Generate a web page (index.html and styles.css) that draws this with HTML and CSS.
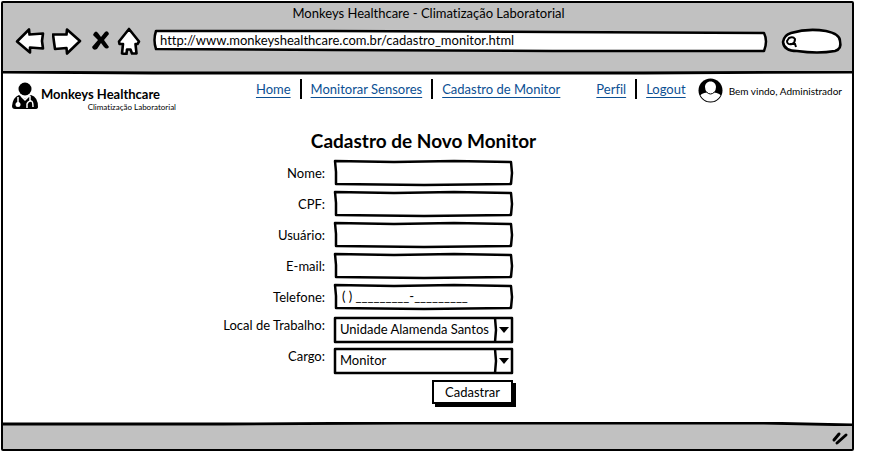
FILE: index.html
```html
<!DOCTYPE html>
<html lang="pt-BR">
<head>
<meta charset="utf-8">
<title>Monkeys Healthcare - Climatização Laboratorial</title>
<link rel="stylesheet" href="styles.css">
</head>
<body>
<div class="window">
  <header class="chrome">
    <div class="chrome-title">Monkeys Healthcare - Climatização Laboratorial</div>
    <div class="toolbar">
      <button class="tool" type="button" aria-label="Voltar">
        <svg width="30" height="28" viewBox="0 0 30 28"><path d="M2 14.500 14 2.500 14.500 7.500 28 6.500 27 14 28 21.500 15 20.500 15 25.500Z"/></svg>
      </button>
      <button class="tool" type="button" aria-label="Avançar">
        <svg width="30" height="28" viewBox="0 0 30 28"><path d="M1 7.500 14.500 7.500 15 2.500 28 14 15 26.500 14.500 21 3 22 2 15Z"/></svg>
      </button>
      <button class="tool stop" type="button" aria-label="Parar">
        <svg width="18" height="20" viewBox="0 0 18 20"><path class="solid" d="M2 2Q4 -1 6 2L9 6 13 1Q16 -1 17 3L12 9 17 16Q15 19 12 16L9 12 5 18Q1 20 0 16L6 9 1 4Z"/></svg>
      </button>
      <button class="tool" type="button" aria-label="Início">
        <svg width="24" height="28" viewBox="0 0 24 28"><path d="M12 2 22 14.500 20.500 17 18.500 17 19.500 26.500 15 26.500 13.500 22.500 10 22.500 9.500 27 5 26.500 6 17 2.500 17 2 14.500Z"/></svg>
      </button>
      <div class="address">
        <svg class="frame" viewBox="0 0 616 22" preserveAspectRatio="none" aria-hidden="true"><path d="M3 1 180 1 400 2 612 3Q616 11 612 21L400 21 180 20 3 19Q0 10 3 1Z"/></svg>
        <input type="text" aria-label="Endereço" value="http://www.monkeyshealthcare.com.br/cadastro_monitor.html">
      </div>
      <div class="search">
        <svg class="frame" viewBox="0 0 60 25" preserveAspectRatio="none" aria-hidden="true"><path d="M9 4Q26 -1 44 2Q58 5 58 12Q60 20 53 22Q36 25 15 22Q2 22 1 13Q2 6 9 4Z"/></svg>
        <svg class="lens" width="12" height="13" viewBox="0 0 12 13" aria-hidden="true"><path d="M3 2Q7 0 9 3Q9 7 6 8Q1 9 1 5ZM4 8 9 8 10 11"/></svg>
        <input type="search" aria-label="Pesquisar">
      </div>
    </div>
  </header>
  <svg class="rule" viewBox="0 0 848 4" preserveAspectRatio="none" aria-hidden="true"><path d="M0 1 150 2 640 2 848 1"/></svg>

  <div class="page">
    <div class="site-header">
      <div class="brand">
        <svg width="27" height="28" viewBox="0 0 27 28" aria-hidden="true">
          <circle cx="13" cy="7" r="6.500"/>
          <path d="M7 13 13 17 19 13Q26 15 26 25Q26 27 23 27H3Q0 27 0 24Q1 15 7 13Z"/>
          <path class="light" d="M6 15V21M15 26V22Q16 19 19 19Q21 19 21 25M18 19V14M9 14 13 18 17 14"/>
          <circle class="light" cx="6" cy="22.500" r="2.500"/>
        </svg>
        <div class="brand-text">
          <strong>Monkeys Healthcare</strong>
          <small>Climatização Laboratorial</small>
        </div>
      </div>
      <nav class="menu">
        <a href="#">Home</a>
        <a href="#">Monitorar Sensores</a>
        <a href="#">Cadastro de Monitor</a>
      </nav>
      <nav class="menu">
        <a href="#">Perfil</a>
        <a href="#">Logout</a>
      </nav>
      <div class="user">
        <svg width="25" height="25" viewBox="0 0 25 25" aria-hidden="true">
          <circle cx="12.500" cy="12.500" r="12"/>
          <path class="light" d="M12.500 3.500C9 3.500 7 6 7 9Q7 12 9 14.500Q3 15.500 2.500 17.500Q6 23.500 12.500 23.500Q19 23.500 22.500 17.500Q22 15.500 16 14.500Q18 12 18 9C18 6 16 3.500 12.500 3.500Z"/>
          <path class="chin" d="M8.500 14Q12.500 18 16.500 14"/>
        </svg>
        <span>Bem vindo, Administrador</span>
      </div>
    </div>

    <main>
      <h1>Cadastro de Novo Monitor</h1>
      <form>
        <div class="group">
          <label for="nome">Nome:</label>
          <div class="field"><svg class="frame" viewBox="0 0 179 26" preserveAspectRatio="none" aria-hidden="true"><path d="M1 1 60 2 120 1 177 2 178 13 177 24 90 25 2 24 2 12Z"/></svg><input id="nome" type="text"></div>
          <label for="cpf">CPF:</label>
          <div class="field"><svg class="frame" viewBox="0 0 179 26" preserveAspectRatio="none" aria-hidden="true"><path d="M1 1 60 2 120 1 177 2 178 13 177 24 90 25 2 24 2 12Z"/></svg><input id="cpf" type="text"></div>
          <label for="usuario">Usuário:</label>
          <div class="field"><svg class="frame" viewBox="0 0 179 26" preserveAspectRatio="none" aria-hidden="true"><path d="M1 1 60 2 120 1 177 2 178 13 177 24 90 25 2 24 2 12Z"/></svg><input id="usuario" type="text"></div>
          <label for="email">E-mail:</label>
          <div class="field"><svg class="frame" viewBox="0 0 179 26" preserveAspectRatio="none" aria-hidden="true"><path d="M1 1 60 2 120 1 177 2 178 13 177 24 90 25 2 24 2 12Z"/></svg><input id="email" type="email"></div>
          <label for="telefone">Telefone:</label>
          <div class="field"><svg class="frame" viewBox="0 0 179 26" preserveAspectRatio="none" aria-hidden="true"><path d="M1 1 60 2 120 1 177 2 178 13 177 24 90 25 2 24 2 12Z"/></svg><input id="telefone" type="tel" value="( ) _________-_________"></div>
        </div>
        <div class="group choices">
          <label for="local">Local de Trabalho:</label>
          <div class="field"><svg class="frame" viewBox="0 0 179 26" preserveAspectRatio="none" aria-hidden="true"><path d="M1 1 70 1 178 1 178 13 178 25 90 25 1 25 1 12ZM161 1 162 13 161 25"/></svg><select id="local"><option>Unidade Alamenda Santos</option></select><svg class="caret" width="10" height="6" viewBox="0 0 10 6" aria-hidden="true"><path d="M0 0H10L5 6Z"/></svg></div>
          <label for="cargo">Cargo:</label>
          <div class="field"><svg class="frame" viewBox="0 0 179 26" preserveAspectRatio="none" aria-hidden="true"><path d="M1 1 70 1 178 1 178 13 178 25 90 25 1 25 1 12ZM161 1 162 13 161 25"/></svg><select id="cargo"><option>Monitor</option></select><svg class="caret" width="10" height="6" viewBox="0 0 10 6" aria-hidden="true"><path d="M0 0H10L5 6Z"/></svg></div>
        </div>
        <div class="group actions">
          <button class="submit" type="submit">Cadastrar</button>
        </div>
      </form>
    </main>
  </div>

  <svg class="rule" viewBox="0 0 848 4" preserveAspectRatio="none" aria-hidden="true"><path d="M0 2 220 2 400 1 760 1 848 3"/></svg>
  <footer class="status">
    <svg width="18" height="16" viewBox="0 0 18 16" aria-hidden="true"><path d="M3 10 8 4M6 13 15 5"/></svg>
  </footer>
</div>
</body>
</html>
```
FILE: styles.css
```css
* {
  box-sizing: border-box;
}

body {
  margin: 0;
  display: flex;
  min-height: 100vh;
  padding: 1px 23px 1px 1px;
  background: #fff;
  color: #000;
  font: 13px/16px Lato, "Liberation Sans", sans-serif;
  font-variant-ligatures: none;
}

input,
select,
button {
  margin: 0;
  border: 0;
  background: none;
  color: inherit;
  font: inherit;
  outline: none;
}

.window {
  flex: 1;
  display: flex;
  flex-direction: column;
  min-width: 0;
  border: 2px solid #000;
  border-radius: 2px;
}

.chrome {
  padding: 2px 10px 16px 12px;
  background: #c1c1c1;
}

.chrome-title {
  text-align: center;
}

.toolbar {
  display: flex;
  align-items: center;
  gap: 6px;
  padding-top: 6px;
}

.tool {
  display: flex;
  padding: 0;
}

.tool + .tool {
  margin-left: 1px;
}

.tool path {
  fill: #fff;
  stroke: #000;
  stroke-width: 2.600;
  stroke-linejoin: round;
}

.tool .solid {
  fill: #000;
  stroke: none;
}

.tool.stop {
  margin-left: 4px;
}

.address,
.search,
.field {
  position: relative;
  display: flex;
}

.address {
  flex: 1;
  height: 22px;
  margin: 0 8px 0 6px;
}

.address input {
  position: relative;
  flex: 1;
  min-width: 0;
  padding: 0 7px 2px;
}

.search {
  width: 60px;
  height: 25px;
}

.search input {
  position: relative;
  width: 100%;
  padding: 0 6px 0 18px;
}

.frame {
  position: absolute;
  inset: 0;
  width: 100%;
  height: 100%;
  overflow: visible;
}

.frame path {
  fill: #fff;
  stroke: #000;
  stroke-width: 2.500;
  stroke-linejoin: round;
  vector-effect: non-scaling-stroke;
}

.lens {
  position: absolute;
  left: 4px;
  top: 7px;
}

.lens path {
  fill: none;
  stroke: #000;
  stroke-width: 2;
}

.rule {
  display: block;
  flex: none;
  width: 100%;
  height: 4px;
  background: linear-gradient(#c1c1c1 50%, #fff 50%);
}

.rule:has(+ .status) {
  background: linear-gradient(#fff 50%, #c1c1c1 50%);
}

.rule path {
  fill: none;
  stroke: #000;
  stroke-width: 2.800;
}

.page {
  flex: 1;
}

.site-header {
  display: flex;
  align-items: flex-start;
  padding: 3px 10px 0 9px;
}

.brand {
  display: flex;
  gap: 2px;
  margin: 4px auto 0 0;
}

.brand-text {
  display: flex;
  flex-direction: column;
  padding-top: 4px;
  width: 135px;
}

.brand-text small {
  font-size: 8px;
  line-height: 10px;
  text-align: right;
}

.light {
  fill: #fff;
}

.brand path.light {
  fill: none;
  stroke: #fff;
  stroke-width: 1.500;
}

.chin {
  fill: none;
  stroke: #000;
}

.menu {
  display: flex;
  margin-right: 27px;
  padding-top: 1px;
}

.menu + .menu {
  margin-right: 12px;
}

.menu a {
  display: flex;
  align-items: center;
  height: 20px;
  padding: 0 9px;
  color: #0b4f93;
  text-decoration: underline;
  text-underline-offset: 3px;
}

.menu a + a {
  border-left: 2px solid #000;
}

.menu a:last-child {
  padding-right: 0;
}

.user {
  display: flex;
  align-items: center;
  gap: 6px;
  font-size: 10px;
}

main {
  padding: 17px 8px 0 0;
}

h1 {
  margin: 0 0 7px;
  font-size: 19px;
  line-height: 24px;
  text-align: center;
}

.group {
  display: grid;
  grid-template-columns: 1fr 179px 1fr;
  gap: 5px 9px;
  align-items: center;
}

.group label {
  grid-column: 1;
  text-align: right;
}

.field {
  grid-column: 2;
  height: 26px;
}

.field input,
.field select {
  position: relative;
  width: 100%;
  padding: 0 8px 2px;
}

.field select {
  appearance: none;
  padding: 0 20px 2px 6px;
}

.caret {
  position: absolute;
  right: 4px;
  top: 10px;
  pointer-events: none;
}

.choices {
  margin-top: 7px;
}

.choices label {
  align-self: start;
}

.actions {
  margin-top: 6px;
}

.submit {
  grid-column: 2;
  justify-self: end;
  height: 24px;
  padding: 0 11px 1px;
  border: 2px solid #000;
  background: #fff;
  box-shadow: 3px 3px 0 #000;
}

.status {
  display: flex;
  justify-content: flex-end;
  padding: 4px 3px 3px;
  background: #c1c1c1;
}

.status path {
  stroke: #000;
  stroke-width: 3;
  stroke-linecap: round;
}
```
